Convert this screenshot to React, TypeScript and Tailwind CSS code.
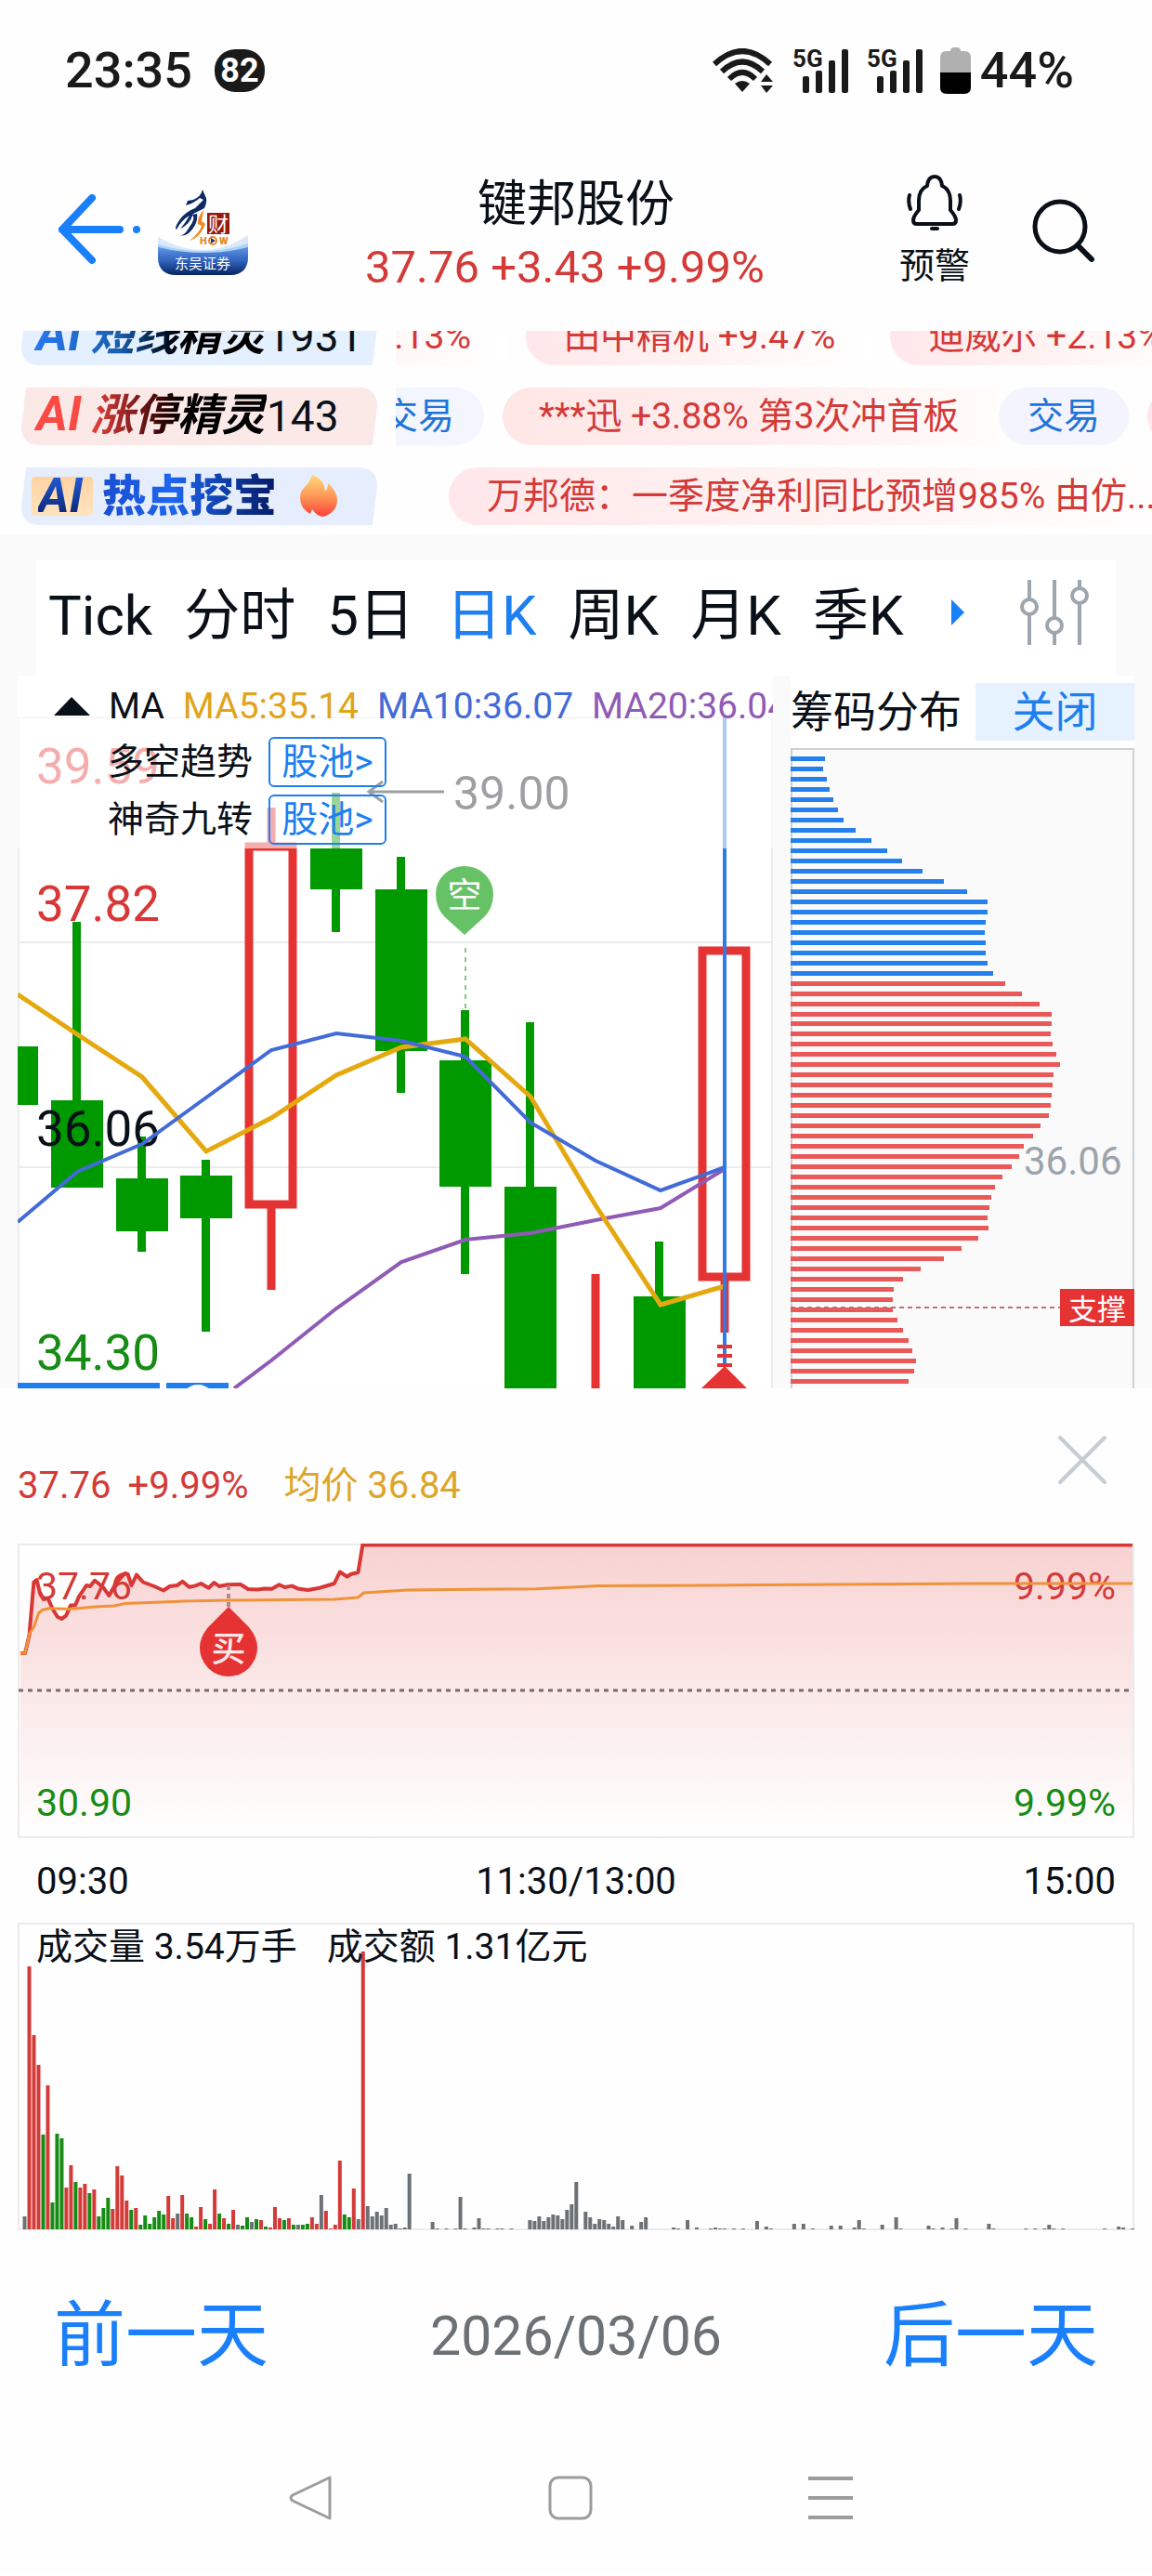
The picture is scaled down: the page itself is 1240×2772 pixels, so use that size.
import React, { useState } from 'react';
import clsx from 'clsx';

type Tone = 'r' | 'g' | 'n';

interface Candle {
  x: number;
  high: number;
  low: number;
  top: number;
  bottom: number;
  up?: boolean;
}

const RED = '#e53232';
const GREEN = '#009900';
const BLUE = '#1d7ff0';

const PERIODS = ['Tick', '分时', '5日', '日K', '周K', '月K', '季K'];

// pixel rows inside the 813 x 767 k-line canvas
const CANDLES: Candle[] = [
  { x: -6, high: 399, low: 462, top: 399, bottom: 462 },
  { x: 64, high: 265, low: 551, top: 457, bottom: 551 },
  { x: 134, high: 496, low: 620, top: 541, bottom: 598 },
  { x: 203, high: 521, low: 706, top: 538, bottom: 584 },
  { x: 273, high: 142, low: 661, top: 180, bottom: 573, up: true },
  { x: 343, high: 126, low: 276, top: 186, bottom: 230 },
  { x: 413, high: 195, low: 449, top: 230, bottom: 404 },
  { x: 482, high: 360, low: 644, top: 414, bottom: 550 },
  { x: 552, high: 373, low: 767, top: 550, bottom: 800 },
  { x: 622, high: 644, low: 900, top: 800, bottom: 900, up: true },
  { x: 691, high: 609, low: 767, top: 668, bottom: 800 },
  { x: 761, high: 292, low: 707, top: 292, bottom: 651, up: true },
];

const MA5 = '0,343 64,386 134,432 203,512 273,476 343,430 413,400 482,391 552,453 622,570 692,677 761,657';
const MA10 = '0,588 64,534 134,504 203,454 273,403 343,385 413,393 482,410 552,481 622,522 692,554 761,529';
const MA20 = '233,767 273,737 343,681 413,631 482,607 552,600 622,586 692,573 761,531';

const CHIPS_TRAPPED = [37, 35, 39, 42, 46, 51, 57, 70, 87, 104, 120, 142, 165, 190, 212, 212, 210, 209, 210, 210, 212, 218];
const CHIPS_PROFIT = [
  231, 249, 268, 281, 281, 280, 282, 286, 290, 283, 282, 281, 280, 278, 269, 261, 251, 246, 238, 228,
  220, 216, 214, 212, 213, 202, 184, 165, 140, 121, 111, 110, 110, 115, 121, 127, 131, 135, 133, 127,
];

const PRICE_LINE =
  '3,118 8,118 12.6,98 17.4,41.5 20.5,39 23.7,52 27.7,60 32.4,58.7 38,71 43,79 47.4,81 52,77.7 57,66.6 62,66.6 66,57 74,45 78,46 83,39.8 91.7,46.7 98.4,56 105.6,43 115.4,32 118.6,33 122.6,45 128,33.6 135,41.5 147,46 157,50.5 163.7,46 171.6,45 177.5,40.8 184.6,46.7 190.6,45.6 197.3,43 205.6,47.7 211.5,42 217,46 226,44.3 240,44 248,49 258,49.4 265.7,48.4 273.6,48.7 281.5,44.3 287.4,47 295.4,45.6 301.3,48.4 312.4,50 325,47.7 331,46 340.8,43 346.8,30.5 354.7,35.7 358.6,33 366.5,31 371.3,1.5 1200,1.5';
const AVG_LINE =
  '3,118 8,118 12.6,97 17.4,90 22.5,75 26.5,71.5 34,69.7 56,70.4 84,68 104,67 115,64.6 155,63 179,62 226,61 341,60 366.5,58 372.5,53 420,50 558,48.7 601,46.7 625,45.6 799,44.6 1036,43 1200,43';

const OPENING_VOLUME =
  'n14 r283 r209 r177 g102 r155 g29 g103 g98 r45 r69 g51 r45 r49 g39 r43 g14 g23 g34 r22 r68 r58 r31 g21 r23 g5 g15 g6 g13 g20 ' +
  'g16 r36 r12 n17 r37 g17 g13 r3 r24 g11 r6 r43 g17 r12 g6 r21 n5 g4 g13 n8 g11 r10 g3 r2 r24 r12 g10 r12 g5 n5 ' +
  'g5 g6 r13 r6 n37 r20 r1 r5 r74 g16 g13 r44 n11 r299 n25 n14 n19 n15 n23 n5 n6 n1 n2 n60';

// minute index -> height, after the stock locked at its limit
const LATE_VOLUME: [number, number][] = [
  [88, 8], [89, 1], [91, 1], [93, 1], [94, 35], [95, 1], [97, 2], [98, 12], [99, 1], [100, 1], [102, 1], [103, 1], [105, 1],
  [109, 10], [110, 9], [111, 14], [112, 9], [113, 13], [114, 16], [115, 15], [116, 11], [117, 21], [118, 27], [119, 51],
  [121, 19], [122, 13], [123, 6], [124, 11], [125, 10], [126, 6], [127, 3], [128, 14], [129, 10], [131, 4], [133, 8], [134, 13],
  [140, 2], [141, 1], [143, 10], [145, 2], [148, 1], [149, 2], [150, 1], [151, 1], [153, 1], [155, 1], [158, 9], [160, 3],
  [161, 1], [166, 6], [168, 6], [170, 1], [174, 4], [176, 4], [179, 2], [180, 10], [181, 1], [185, 5], [188, 13], [189, 1],
  [195, 4], [196, 1], [198, 2], [200, 1], [201, 12], [203, 1], [208, 6], [209, 1], [216, 1], [218, 1], [220, 1], [221, 5],
  [222, 1], [224, 1], [233, 1], [236, 3], [237, 2], [239, 1],
];

const VOLUME = [
  ...OPENING_VOLUME.split(' ').map((v, i) => ({ i, tone: v[0] as Tone, h: Number(v.slice(1)) })),
  ...LATE_VOLUME.map(([i, h]) => ({ i, tone: 'n' as Tone, h })),
];

const VOLUME_FILL: Record<Tone, string> = { r: '#d33a38', g: '#168c14', n: '#6c7175' };

const Signal = () => (
  <svg width="61" height="48" viewBox="0 0 61 48" fill="#1a1a1a">
    <text x="1" y="20" fontSize="26" fontWeight="700" fontFamily="Roboto">5G</text>
    <rect x="12" y="30" width="7" height="18" rx="2" />
    <rect x="26" y="24" width="7" height="24" rx="2" />
    <rect x="40" y="13" width="7" height="35" rx="2" />
    <rect x="54" y="1" width="7" height="47" rx="2" />
  </svg>
);

const StatusBar = () => (
  <div className="flex items-center justify-between pt-[46px] pr-[84px] pl-[70px] text-[#1a1a1a]">
    <div className="flex items-center gap-6">
      <span className="text-[54px] leading-[60px] font-medium">23:35</span>
      <span className="flex h-[46px] w-[54px] items-center justify-center rounded-[22px] bg-[#1a1a1a] text-[36px] leading-[46px] font-bold text-white">
        82
      </span>
    </div>
    <div className="flex items-center gap-[19px]">
      <svg width="66" height="48" viewBox="0 0 66 48" fill="none" stroke="#1a1a1a" strokeWidth="6">
        <path d="M2 17 Q32 -11 62 17" />
        <path d="M10 25 Q32 4 54 25" />
        <path d="M18 33 Q32 19 46 33" />
        <path d="M24 38 Q32 32 40 38 L32 47 Z" fill="#1a1a1a" stroke="none" />
        <path d="M52 36 L58 28 L65 36 Z M52 40 L58 48 L65 40 Z" fill="#1a1a1a" stroke="none" />
      </svg>
      <Signal />
      <Signal />
      <div className="flex items-center gap-[10px]">
        <svg width="33" height="50" viewBox="0 0 33 50">
          <path d="M11 4 Q11 0 15 0 H18 Q22 0 22 4 H26 Q33 4 33 11 V28 H0 V11 Q0 4 7 4 Z" fill="#b0b0b0" />
          <path d="M0 27 H33 V43 Q33 50 26 50 H7 Q0 50 0 43 Z" fill="#000" />
        </svg>
        <span className="text-[54px] leading-[60px] font-medium">44%</span>
      </div>
    </div>
  </div>
);

const BrokerLogo = () => (
  <svg width="97" height="92" viewBox="0 0 97 92">
    <defs>
      <linearGradient id="brand" x1="0" y1="0" x2="0" y2="1">
        <stop offset="0" stopColor="#5f94e8" />
        <stop offset="0.5" stopColor="#2f62bb" />
        <stop offset="1" stopColor="#06245f" />
      </linearGradient>
    </defs>
    <path d="M0 51 Q50 80 97 49 V72 Q97 92 77 92 H20 Q0 92 0 72 Z" fill="#dbe8fb" />
    <path d="M0 59 Q50 74 97 58 V72 Q97 92 77 92 H20 Q0 92 0 72 Z" fill="#a9d2f3" />
    <path d="M0 62 Q50 74 97 62 V72 Q97 92 77 92 H20 Q0 92 0 72 Z" fill="url(#brand)" />
    <path
      d="M48 0 Q46 8 38 11 L32 12 L30 17 Q40 14 45 9 L49 11 L40 20 Q29 24 23 33 Q17 42 20 43 Q25 33 34 28 Q28 38 24 42 Q34 38 38 26 L50 20 Q54 11 51 7 Z"
      fill="#0d2a63"
    />
    <path d="M37 27 Q41 31 34 40 Q30 48 24 50 Q34 50 40 38 Q43 32 42 26 Z" fill="#0d2a63" />
    <path d="M49 22 Q42 30 43 37 L47 39 Q45 46 34 55 Q46 51 51 37 L47 34 Q48 28 49 22 Z" fill="#ef8a24" />
    <rect x="53" y="25" width="24" height="23" fill="#941a12" />
    <text x="54" y="45" fontSize="22" fill="#fff" fontFamily="Noto Sans CJK SC">财</text>
    <text x="45" y="59" fontSize="11" fontWeight="900" fill="#e8892b" fontFamily="Roboto">H</text>
    <circle cx="59" cy="55" r="4" fill="none" stroke="#e8892b" strokeWidth="2" />
    <path d="M57 52 L62 55 L57 58 Z" fill="#23395d" />
    <text x="66" y="59" fontSize="11" fontWeight="900" fill="#e8892b" fontFamily="Roboto">W</text>
    <text x="48" y="85" fontSize="15" textAnchor="middle" fill="#fff" fontFamily="Noto Sans CJK SC">东吴证券</text>
  </svg>
);

const Header = () => (
  <header className="flex items-start justify-between px-[60px] pt-20 pb-[34px]">
    <div className="flex w-[260px] items-start gap-[17px] pt-[18px]">
      <button type="button" aria-label="返回">
        <svg width="93" height="84" viewBox="0 0 93 84" fill="none" stroke="#1a7ffb" strokeWidth="8" strokeLinecap="round" strokeLinejoin="round">
          <path d="M39 9 L7 43 L39 76 M7 43 H69" />
          <circle cx="87" cy="43" r="4" fill="#1a7ffb" stroke="none" />
        </svg>
      </button>
      <BrokerLogo />
    </div>
    <div className="flex flex-col items-center">
      <h1 className="text-[53px] leading-[68px] text-[#0a1018]">键邦股份</h1>
      <p className="pr-6 text-[49px] leading-[68px] text-[#d33a38]">37.76 +3.43 +9.99%</p>
    </div>
    <div className="flex w-[260px] items-start justify-end gap-[66px]">
      <button type="button" className="flex flex-col items-center gap-1 text-[#0a1018]">
        <svg width="62" height="62" viewBox="0 0 62 62" fill="none" stroke="#0a1018" strokeWidth="4" strokeLinejoin="round" strokeLinecap="round">
          <path d="M23 14 Q24 4 31 4 Q38 4 39 14 Q48 18 48 30 V40 Q54 47 54 51 Q54 55 50 55 H12 Q8 55 8 51 Q8 47 14 40 V30 Q14 18 23 14 Z" />
          <path d="M4 24 Q2 31 5 39 M58 24 Q60 31 57 39" />
          <path d="M28 60 H34" />
        </svg>
        <span className="text-[38px] leading-[68px]">预警</span>
      </button>
      <button type="button" aria-label="搜索" className="pt-[27px]">
        <svg width="70" height="70" viewBox="0 0 70 70" fill="none" stroke="#0a1018" strokeWidth="5" strokeLinecap="round">
          <circle cx="31" cy="31" r="27" />
          <path d="M50 51 L65 66" strokeWidth="6" />
        </svg>
      </button>
    </div>
  </header>
);

const BadgeShape = ({ fill }: { fill: string }) => (
  <svg className="absolute inset-0" width="383" height="62" viewBox="0 0 383 62">
    <path d="M5 0 H363 Q383 0 383 20 L378 62 H20 Q0 62 0 42 Z" fill={fill} />
  </svg>
);

const Chip = ({ children }: { children: React.ReactNode }) => (
  <a
    href="#"
    className="shrink-0 rounded-l-full bg-linear-to-r from-[#ffe7ea] via-[#fff3f2] to-white pr-[39px] pl-[41px] text-[#d33a38]"
  >
    {children}
  </a>
);

const Tickers = () => (
  <section className="flex h-[220px] flex-col justify-end gap-6 overflow-hidden pb-[11px] pl-[23px] text-[39px] leading-[62px] whitespace-nowrap">
    <div className="flex h-[62px] shrink-0 gap-5">
      <a href="#" className="relative flex w-[383px] shrink-0 items-center">
        <BadgeShape fill="#e5f0fe" />
        <span className="relative w-[264px] bg-linear-to-r from-[#2c7bfa] via-[#1a5fae] via-40% to-black to-70% bg-clip-text pl-4 font-bold text-transparent italic">
          <span className="text-[52px]">AI</span> <span className="text-[47px]">短线精灵</span>
        </span>
        <span className="relative text-[46px] text-[#0a1018]">1931</span>
      </a>
      <div className="flex min-w-0 flex-1 gap-5 overflow-hidden">
        <div className="flex w-[120px] shrink-0 justify-end overflow-hidden">
          <Chip>中信重工 +2.13%</Chip>
        </div>
        <Chip>田中精机 +9.47%</Chip>
        <Chip>迪威尔 +2.13%</Chip>
      </div>
    </div>
    <div className="flex h-[62px] shrink-0 gap-5">
      <a href="#" className="relative flex w-[383px] shrink-0 items-center">
        <BadgeShape fill="#fbe9e8" />
        <span className="relative w-[264px] bg-linear-to-r from-[#fa4a44] from-25% via-[#8c2020] via-45% to-black to-70% bg-clip-text pl-4 font-bold text-transparent italic">
          <span className="text-[52px]">AI</span> <span className="text-[47px]">涨停精灵</span>
        </span>
        <span className="relative text-[46px] text-[#0a1018]">143</span>
      </a>
      <div className="flex min-w-0 flex-1 gap-5 overflow-hidden">
        <div className="flex w-[95px] shrink-0 justify-end overflow-hidden rounded-r-full bg-[#f3f6ff]">
          <a href="#" className="shrink-0 pr-8 text-[#1f74d8]">交易</a>
        </div>
        <div className="flex shrink-0">
          <a href="#" className="w-[534px] rounded-l-full bg-linear-to-r from-[#ffe7e6] via-[#ffedee] to-[#fffcfa] pl-[39px] text-[#d33a38]">
            ***迅 +3.88% 第3次冲首板
          </a>
          <a href="#" className="rounded-full bg-[#f4f4ff] px-[31px] text-[#1f74d8]">交易</a>
        </div>
        <Chip>涨停</Chip>
      </div>
    </div>
    <div className="flex h-[62px] shrink-0 gap-[77px]">
      <a href="#" className="relative flex w-[383px] shrink-0 items-center">
        <BadgeShape fill="#e6eefd" />
        <span className="relative ml-[11px] flex h-[42px] w-[66px] items-center justify-center rounded bg-linear-to-b from-[#ffd3a0] to-[#ffe3c0]">
          <span className="bg-linear-to-t from-[#0a1a5c] to-[#2468f2] bg-clip-text pr-1 text-[52px] font-bold text-transparent italic">AI</span>
        </span>
        <span className="relative ml-[10px] bg-linear-to-r from-[#1a4fd0] via-[#1e66f0] via-40% to-[#061a66] bg-clip-text text-[47px] font-black text-transparent">
          热点挖宝
        </span>
        <svg className="relative ml-[25px]" width="40" height="46" viewBox="0 0 40 46">
          <defs>
            <linearGradient id="flame" x1="0" y1="0" x2="0" y2="1">
              <stop offset="0" stopColor="#ffd97a" />
              <stop offset="0.5" stopColor="#ff9a58" />
              <stop offset="1" stopColor="#fb4038" />
            </linearGradient>
          </defs>
          <path d="M13 0 Q26 4 27 18 Q30 15 30 9 Q40 18 40 27 Q40 40 25 45 Q17 44 13 37 L11 42 Q0 36 0 25 Q0 18 5 13 Q11 7 13 0 Z" fill="url(#flame)" />
        </svg>
      </a>
      <div className="flex min-w-0 flex-1 overflow-hidden">
        <Chip>万邦德：一季度净利同比预增985% 由仿...</Chip>
      </div>
    </div>
  </section>
);

const PeriodTabs = () => {
  const [active, setActive] = useState('日K');

  return (
    <nav className="mx-[39px] mt-[27px] flex h-[124px] items-center justify-between bg-white pr-7 pb-1 pl-[13px]">
      <div className="flex items-center gap-[34px] text-[60px] leading-[80px]">
        {PERIODS.map((p) => (
          <button
            key={p}
            type="button"
            onClick={() => setActive(p)}
            className={clsx('whitespace-nowrap', p === active ? 'text-[#1d7ff0]' : 'text-[#0a1018]')}
          >
            {p}
          </button>
        ))}
      </div>
      <div className="flex items-center gap-[58px] pb-2">
        <svg width="16" height="28" viewBox="0 0 16 28" fill="#1a7ffb">
          <path d="M1 0 L15 14 L1 28 Z" />
        </svg>
        <button type="button" aria-label="设置">
          <svg width="76" height="70" viewBox="0 0 76 70" fill="none" stroke="#9da6ae" strokeWidth="4">
            <path d="M11 0 V20 M11 38 V70 M38 0 V40 M38 58 V70 M65 0 V9 M65 26 V70" />
            <circle cx="11" cy="29" r="8" />
            <circle cx="38" cy="49" r="8" />
            <circle cx="65" cy="17" r="8" />
          </svg>
        </button>
      </div>
    </nav>
  );
};

const KLineChart = () => (
  <div className="relative min-w-0 overflow-hidden bg-white">
    <svg className="block h-auto w-full" viewBox="0 0 813 767" fontFamily="Roboto" fontSize="53">
      <path d="M0 45 H812 V767 M1 45 V767" fill="none" stroke="#ececee" strokeWidth="2" />
      <path d="M0 287 H812 M0 529 H812" stroke="#ececee" strokeWidth="2" />
      {CANDLES.map((c) =>
        c.up ? (
          <g key={c.x} fill="none" stroke={RED} strokeWidth="9">
            <path d={`M${c.x} ${c.high} V${c.top} M${c.x} ${c.bottom} V${c.low}`} />
            <rect x={c.x - 24} y={c.top + 4} width="47" height={c.bottom - c.top - 8} />
          </g>
        ) : (
          <g key={c.x} fill={GREEN}>
            <rect x={c.x - 5} y={c.high} width="9" height={c.low - c.high} />
            <rect x={c.x - 28} y={c.top} width="56" height={c.bottom - c.top} />
          </g>
        ),
      )}
      <text x="20" y="116" fill={RED}>39.59</text>
      <text x="20" y="264" fill="#d93636">37.82</text>
      <text x="20" y="506" fill="#0a1018">36.06</text>
      <text x="20" y="747" fill="#168c14">34.30</text>
      <polyline points={MA20} fill="none" stroke="#8f5bb5" strokeWidth="4" />
      <polyline points={MA5} fill="none" stroke="#e5a910" strokeWidth="5" />
      <polyline points={MA10} fill="none" stroke="#426bd8" strokeWidth="4" />
      <path d="M378 125 H459 M393 114 L378 125 L393 136" fill="none" stroke="#0a1018" strokeWidth="3" />
      <text x="469" y="144" fontSize="50" fill="#0a1018">39.00</text>
      <path d="M482 293 V360" stroke={GREEN} strokeWidth="1" strokeDasharray="5 5" />
      <path d="M481 279 L460 260 Q450 250 450 235 A31 30 0 0 1 512 235 Q512 250 502 260 Z" fill="#67c267" />
      <text x="481" y="250" fontSize="37" textAnchor="middle" fill="#fff" fontFamily="Noto Sans CJK SC">空</text>
      <path d="M761 45 V743" stroke="#2f7be6" strokeWidth="4" />
      <path d="M753 722 H769 M753 732 H769 M753 742 H769" stroke={RED} strokeWidth="4" />
      <path d="M761 743 L785 767 H736 Z" fill={RED} />
      <path d="M0 764 H153 M160 764 H227" stroke={BLUE} strokeWidth="6" />
      <circle cx="194" cy="782" r="19" fill="#fff" />
    </svg>
    <div className="absolute inset-x-0 top-0 h-[186px] overflow-hidden bg-white/60 text-[39px] leading-[62px] whitespace-nowrap text-[#0a1018]">
      <div className="flex h-[62px] items-center gap-5 pt-1 pl-[39px]">
        <svg className="shrink-0" width="39" height="20" viewBox="0 0 39 20">
          <path d="M0 20 L19 0 L39 20 Z" fill="#0a1018" />
        </svg>
        <span>MA</span>
        <span className="text-[#dfa41c]">MA5:35.14</span>
        <span className="text-[#426bd8]">MA10:36.07</span>
        <span className="text-[#8f5bb5]">MA20:36.04</span>
      </div>
      {['多空趋势', '神奇九转'].map((name) => (
        <div key={name} className="flex h-[62px] items-center gap-[17px] pl-[97px]">
          <span>{name}</span>
          <button type="button" className="h-[54px] w-[127px] rounded-md border-2 border-[#1d7ff0] leading-[50px] text-[#1d7ff0]">
            股池&gt;
          </button>
        </div>
      ))}
    </div>
  </div>
);

const ChipDistribution = () => (
  <aside className="min-w-0">
    <div className="flex h-[78px] items-center justify-between bg-white">
      <h2 className="text-[46px] leading-[62px] whitespace-nowrap text-[#0a1018]">筹码分布</h2>
      <button type="button" className="h-[62px] w-[171px] bg-[#e6f2ff] text-[46px] leading-[62px] text-[#1d7ff0]">
        关闭
      </button>
    </div>
    <svg className="block h-auto w-full" viewBox="0 0 370 689">
      <path d="M1 689 V1 H369 V689" fill="none" stroke="#cdd1d2" strokeWidth="2" />
      {[...CHIPS_TRAPPED, ...CHIPS_PROFIT].map((w, i) => (
        <rect
          key={i}
          x="0"
          y={Math.round(9 + i * 10.98)}
          width={w}
          height="5"
          fill={i < CHIPS_TRAPPED.length ? '#2480ec' : '#ea5858'}
        />
      ))}
      <path d="M0 602 H290" stroke="#b87378" strokeWidth="2" strokeDasharray="5 4" />
      <text x="251" y="459" fontFamily="Roboto" fontSize="42" fill="#9ba3ad">36.06</text>
      <rect x="290" y="582" width="80" height="40" fill={RED} />
      <text x="330" y="615" textAnchor="middle" fontFamily="Noto Sans CJK SC" fontSize="31" fill="#fff">支撑</text>
    </svg>
  </aside>
);

const Intraday = () => (
  <svg className="block h-auto w-full" viewBox="0 0 1202 318" fontFamily="Roboto" fontSize="41">
    <defs>
      <linearGradient id="area" x1="0" y1="0" x2="0" y2="1">
        <stop offset="0" stopColor="#f9d2d2" />
        <stop offset="0.5" stopColor="#fbe8e8" />
        <stop offset="1" stopColor="#fff" />
      </linearGradient>
    </defs>
    <rect x="1" y="1" width="1200" height="315" fill="none" stroke="#ebebeb" strokeWidth="2" />
    <polygon points={`3,315 ${PRICE_LINE} 1200,315`} fill="url(#area)" />
    <path d="M1 158 H1200" stroke="#7b6a6c" strokeWidth="3" strokeDasharray="5 5" />
    <g fill="#d33a38">
      <text x="20" y="60">37.76</text>
      <text x="1182" y="60" textAnchor="end">9.99%</text>
    </g>
    <g fill="#168c14">
      <text x="20" y="293">30.90</text>
      <text x="1182" y="293" textAnchor="end">9.99%</text>
    </g>
    <polyline points={PRICE_LINE} fill="none" stroke="#d93636" strokeWidth="4" strokeLinejoin="round" />
    <polyline points={AVG_LINE} fill="none" stroke="#f09238" strokeWidth="3" strokeLinejoin="round" />
    <path d="M227 45 V68" stroke="#b08a90" strokeWidth="4" strokeDasharray="5 4" />
    <path d="M227 68 L249 90 Q258 101 258 112 A31 31 0 0 1 196 112 Q196 101 205 90 Z" fill={RED} />
    <text x="227" y="127" fontSize="37" fontWeight="500" textAnchor="middle" fill="#fde6e6" fontFamily="Noto Sans CJK SC">买</text>
  </svg>
);

const Volume = () => (
  <div className="relative">
    <svg className="block h-auto w-full" viewBox="0 0 1202 331">
      <rect x="1" y="1" width="1200" height="329" fill="none" stroke="#ebebeb" strokeWidth="2" />
      {VOLUME.map((v) => (
        <rect key={v.i} x={5.5 + v.i * 4.99} y={330 - v.h} width="4" height={v.h} fill={VOLUME_FILL[v.tone]} />
      ))}
    </svg>
    <div className="absolute top-0 left-5 flex gap-8 text-[39px] leading-[52px] text-[#0a1018]">
      <span>成交量 3.54万手</span>
      <span>成交额 1.31亿元</span>
    </div>
  </div>
);

const SystemNav = () => (
  <div className="flex items-center justify-between pt-[99px] pr-[322px] pb-14 pl-[310px]">
    <svg width="48" height="50" viewBox="0 0 48 50" fill="none" stroke="#9c9c9c" strokeWidth="3" strokeLinejoin="round">
      <path d="M45 3 V47 L5 28 Q1 25 5 22 Z" />
    </svg>
    <svg width="48" height="50" viewBox="0 0 48 50" fill="none" stroke="#9c9c9c" strokeWidth="3">
      <rect x="2" y="3" width="44" height="44" rx="9" />
    </svg>
    <svg width="48" height="50" viewBox="0 0 48 50" stroke="#9c9c9c" strokeWidth="4">
      <path d="M0 4 H48 M0 25 H48 M0 46 H48" />
    </svg>
  </div>
);

const App: React.FC = () => {
  return (
    <main className="overflow-hidden bg-[#fefefe] font-['Roboto','Noto_Sans_CJK_SC',sans-serif]">
      <StatusBar />
      <Header />
      <Tickers />
      <section className="flow-root bg-[#fafafa]">
        <PeriodTabs />
        <div className="grid grid-cols-[813fr_370fr] gap-[19px] px-[19px]">
          <KLineChart />
          <ChipDistribution />
        </div>
      </section>
      <section className="px-[19px]">
        <div className="flex h-[167px] items-end justify-between pr-7 pb-[38px]">
          <p className="flex gap-[18px] text-[40px] leading-[48px] text-[#d33a38]">
            <span>37.76</span>
            <span>+9.99%</span>
            <span className="pl-5 text-[#dca62a]">均价 36.84</span>
          </p>
          <button type="button" aria-label="关闭" className="pb-6">
            <svg width="56" height="56" viewBox="0 0 56 56" stroke="#c5ccd3" strokeWidth="4" strokeLinecap="round">
              <path d="M4 4 L52 52 M52 4 L4 52" />
            </svg>
          </button>
        </div>
        <Intraday />
        <div className="grid grid-cols-3 px-5 pt-[22px] pb-5 text-[40px] leading-[48px] text-[#0a1018]">
          <span>09:30</span>
          <span className="text-center">11:30/13:00</span>
          <span className="text-right">15:00</span>
        </div>
        <Volume />
      </section>
      <div className="flex items-center justify-between px-[58px] pt-16">
        <button type="button" className="text-[77px] leading-[100px] text-[#1a7ffb]">前一天</button>
        <time className="text-[59px] leading-[100px] text-[#6c7175]">2026/03/06</time>
        <button type="button" className="text-[77px] leading-[100px] text-[#1a7ffb]">后一天</button>
      </div>
      <SystemNav />
    </main>
  );
};

export default App;
